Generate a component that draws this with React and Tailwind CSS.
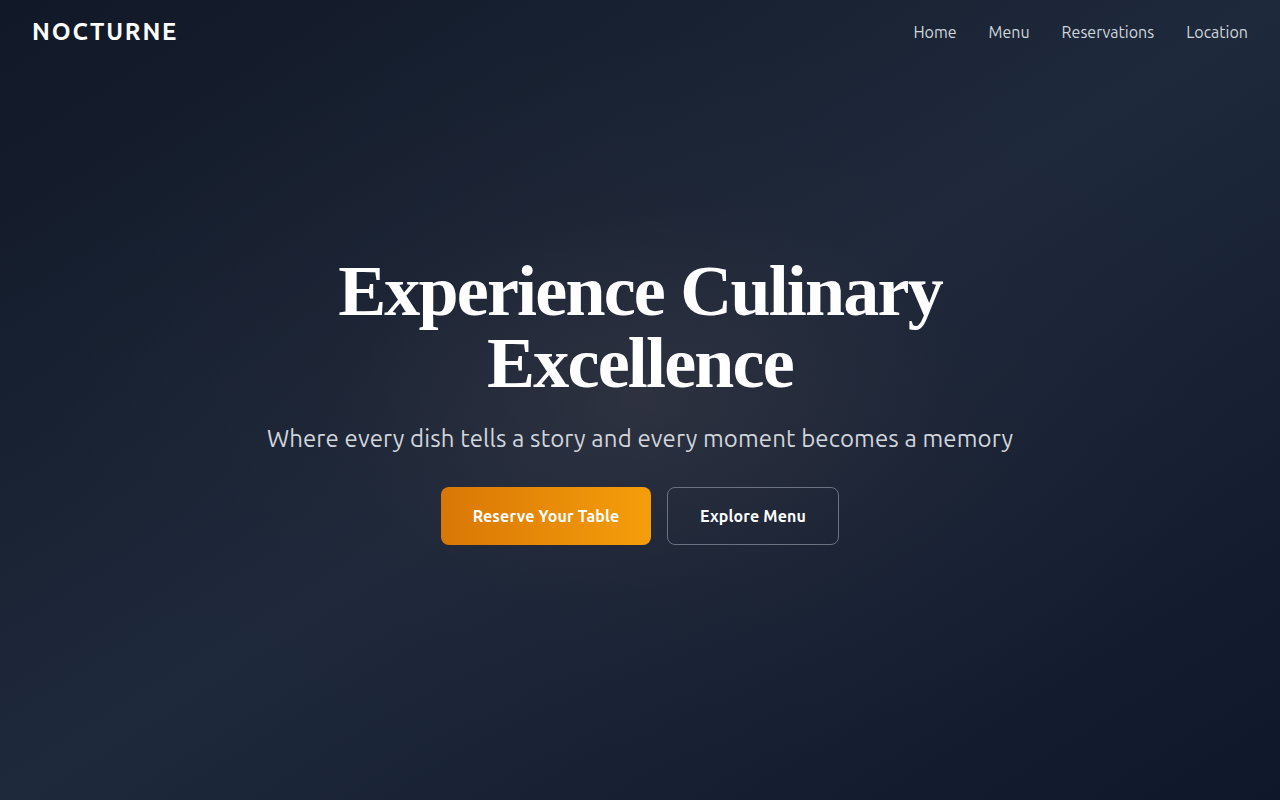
const links = ["Home", "Menu", "Reservations", "Location"];

const sans = { fontFamily: "Ubuntu, 'Noto Sans', 'Open Sans', sans-serif" };

export default function App() {
  return (
    <div
      className="relative h-screen w-full overflow-hidden bg-gradient-to-br from-[#111827] via-[#1e293b] to-[#0f172a] text-white"
      style={sans}
    >
      <div className="absolute inset-0 bg-[radial-gradient(ellipse_at_center,rgba(64,60,70,0.45)_0%,rgba(40,40,55,0.2)_35%,transparent_65%)]" />

      <nav className="absolute inset-x-0 top-0 z-10 flex items-center justify-between px-8 py-4">
        <span className="text-2xl font-bold tracking-[0.075em] text-white">NOCTURNE</span>
        <ul className="flex items-center gap-8">
          {links.map((link) => (
            <li key={link}>
              <a href="#" className="text-base text-gray-300 hover:text-white">
                {link}
              </a>
            </li>
          ))}
        </ul>
      </nav>

      <section className="relative flex h-full flex-col items-center justify-center px-6 text-center">
        <h1
          className="text-[72px] font-bold leading-none tracking-[-0.025em] text-white"
          style={{ fontFamily: "'Liberation Serif', 'Times New Roman', serif" }}
        >
          Experience Culinary
          <br />
          Excellence
        </h1>
        <p className="mt-6 text-2xl tracking-[0.005em] text-gray-300">
          Where every dish tells a story and every moment becomes a memory
        </p>
        <div className="mt-8 flex items-center gap-4">
          <button className="h-[58px] w-[210px] rounded-lg bg-gradient-to-r from-[#d97706] to-[#f59e0b] text-base font-bold tracking-[0.01em] text-white">
            Reserve Your Table
          </button>
          <button className="h-[58px] w-[172px] rounded-lg border border-[#6b7280] text-base font-bold tracking-[0.01em] text-white">
            Explore Menu
          </button>
        </div>
      </section>
    </div>
  );
}
